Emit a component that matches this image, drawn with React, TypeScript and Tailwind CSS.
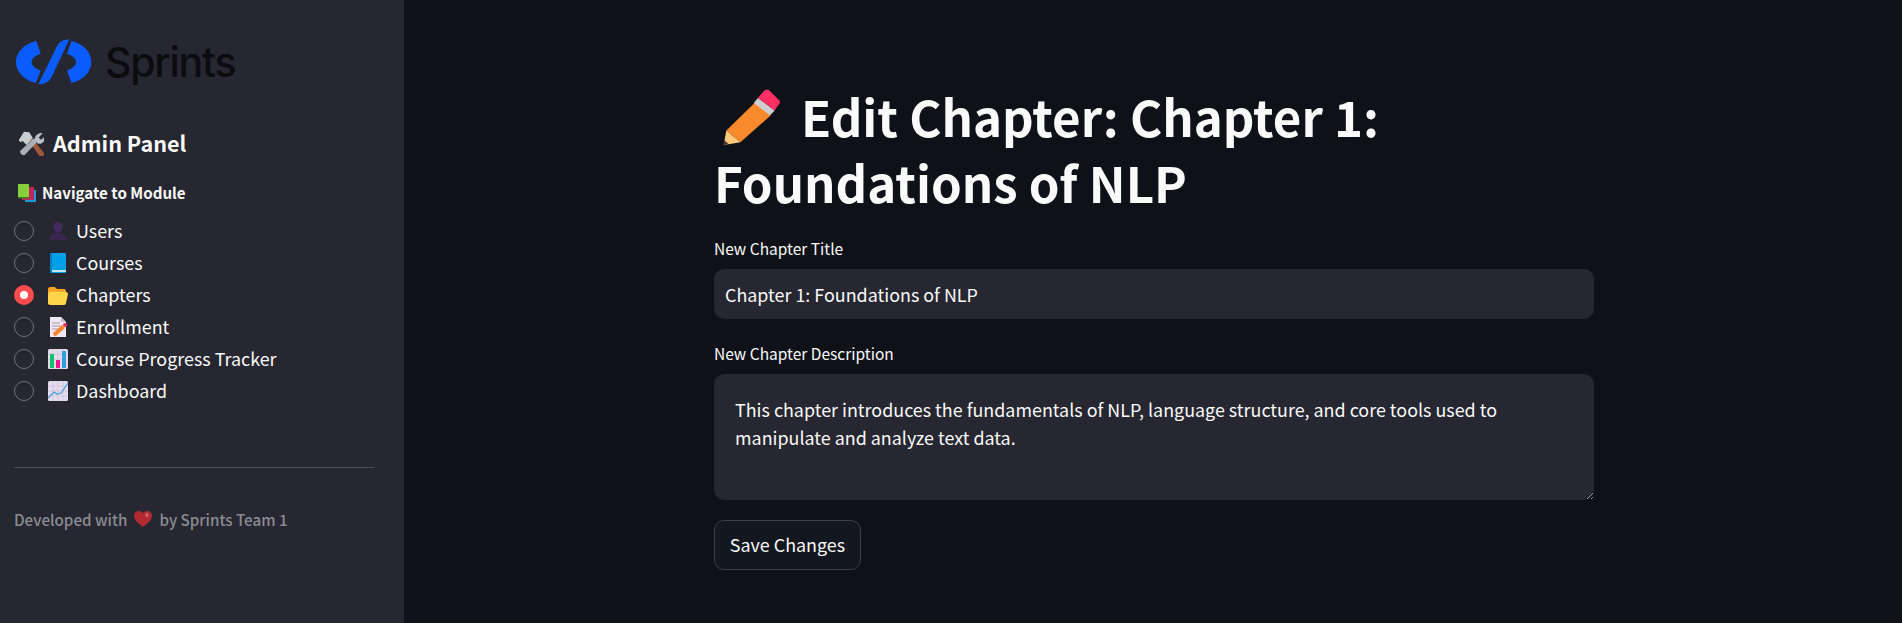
const font = "font-['Noto_Sans_CJK_SC',sans-serif]"

function SprintsLogo() {
  return (
    <svg width="80" height="46" viewBox="15 21 240 138" className="shrink-0">
      <path fill="#0b5cff" d="M79 27C42 36 18 60 18 90c0 30 24 55 60 63l14-38c-16-4-27-14-27-25 0-11 11-20 27-25z" />
      <path fill="#0b5cff" d="M184 27c37 9 60 33 60 63 0 30-24 55-60 63l-13-38c16-4 27-14 27-25 0-11-11-20-27-25z" />
      <path fill="#0b5cff" d="M178 22c-16 1-30 6-38 22L85 157c18-1 32-6 40-22z" />
    </svg>
  )
}

function Tools() {
  return (
    <svg width="26" height="26" viewBox="24 15 78 78" className="shrink-0">
      <path d="M52 42l10-8 40 50c2 8-6 10-8 10-4 1-6-2-8-4z" fill="#a0593a" />
      <path d="M30 78l42-38 10 10-38 40c-8 2-14-4-14-12z" fill="#aab0b5" />
      <path d="M98 24C84 22 74 32 74 44l10 12c12 2 24-8 20-22L94 44l-8-6z" fill="#b8bec3" />
      <path d="M26 46l16-26 16 2 10 16-18 22-12-12-6 4z" fill="#c8cdd1" />
    </svg>
  )
}

function Books() {
  return (
    <svg width="19" height="18" viewBox="0 0 19 18" className="shrink-0">
      <rect x="8" y="6" width="11" height="12" fill="#1c9bd6" />
      <rect x="5" y="3" width="12" height="13" fill="#c2255c" />
      <rect x="1" y="0" width="11" height="13" fill="#84d13a" />
      <rect x="1" y="13" width="11" height="1.5" fill="#3f7a1f" />
    </svg>
  )
}

function UserIcon() {
  return (
    <svg width="20" height="20" viewBox="0 0 20 20">
      <ellipse cx="10" cy="6" rx="4.5" ry="5.5" fill="#432a5c" />
      <path d="M1 19c0-4 3-6 7-7h4c4 1 7 3 7 7z" fill="#3a2450" />
    </svg>
  )
}

function BookIcon() {
  return (
    <svg width="20" height="20" viewBox="0 0 20 20">
      <rect x="2" y="0" width="16" height="20" rx="1" fill="#00a0e8" />
      <rect x="2" y="17" width="16" height="2" fill="#bfe6f7" />
      <rect x="2" y="0" width="2" height="20" fill="#0080c4" />
    </svg>
  )
}

function FolderIcon() {
  return (
    <svg width="20" height="20" viewBox="0 0 20 20">
      <path d="M0 4c0-1 1-2 2-2h5l2 2h7c1 0 2 1 2 2v2H0z" fill="#f5a623" />
      <path d="M0 18V9c0-1 1-2 2-2h16c1 0 2 1 2 2l-2 9c0 1-1 2-2 2H2c-1 0-2-1-2-2z" fill="#ffd54a" />
    </svg>
  )
}

function MemoIcon() {
  return (
    <svg width="20" height="20" viewBox="0 0 20 20">
      <path d="M2 0h11l5 5v15H2z" fill="#f0e8f2" />
      <path d="M13 0l5 5h-5z" fill="#c8bccc" />
      <path d="M4 6h8M4 9h10M4 12h6" stroke="#a99aae" strokeWidth="1" />
      <path d="M6 19l-1-3 9-8 3 3-9 8z" fill="#f5882c" />
      <circle cx="17" cy="8" r="2" fill="#f0305f" />
    </svg>
  )
}

function ChartIcon() {
  return (
    <svg width="20" height="20" viewBox="0 0 20 20">
      <rect width="20" height="20" rx="1.5" fill="#e6dcee" />
      <path d="M0 5h20M0 10h20M0 15h20M5 0v20M10 0v20M15 0v20" stroke="#c8bcd2" strokeWidth="0.6" />
      <rect x="2" y="5" width="4" height="14" fill="#14c26b" />
      <rect x="8" y="11" width="4" height="8" fill="#f0148c" />
      <rect x="14" y="2" width="4" height="17" fill="#2f9fe0" />
    </svg>
  )
}

function TrendIcon() {
  return (
    <svg width="20" height="20" viewBox="0 0 20 20">
      <rect width="20" height="20" rx="1.5" fill="#e6dcee" />
      <path d="M0 5h20M0 10h20M0 15h20M5 0v20M10 0v20M15 0v20" stroke="#c8bcd2" strokeWidth="0.6" />
      <path d="M0 17l6-6 3 2 4-1 7-10" fill="none" stroke="#3a9fe0" strokeWidth="1.2" />
    </svg>
  )
}

function Heart() {
  return (
    <svg width="18" height="16" viewBox="0 0 18 16" className="shrink-0">
      <path d="M9 16C4 12 0 9 0 5c0-3 2-5 5-5 2 0 3 1 4 2 1-1 2-2 4-2 3 0 5 2 5 5 0 4-4 7-9 11z" fill="#b32a32" />
      <ellipse cx="13" cy="4" rx="1.5" ry="2" fill="#d4686c" />
    </svg>
  )
}

function Pencil() {
  return (
    <svg width="57" height="57" viewBox="68 46 170 170" className="ml-[9px] mr-[21px] inline-block align-[-9px]">
      <path d="M78 170l87-85 45 40-90 80z" fill="#f98a2b" />
      <path d="M78 170l-8 43 50-8z" fill="#ffcb7a" />
      <path d="M72 198l-2 15 15-2z" fill="#4a3a30" />
      <path d="M160 88l12-15 50 37-14 15z" fill="#cfcfcf" />
      <path d="M172 73l18-21c7-7 14-6 20 2l22 22c8 8 8 12 0 19l-10 15z" fill="#ff2f66" />
    </svg>
  )
}

const modules = [
  { name: "Users", icon: <UserIcon /> },
  { name: "Courses", icon: <BookIcon /> },
  { name: "Chapters", icon: <FolderIcon />, active: true },
  { name: "Enrollment", icon: <MemoIcon /> },
  { name: "Course Progress Tracker", icon: <ChartIcon /> },
  { name: "Dashboard", icon: <TrendIcon /> },
]

export default function App() {
  return (
    <div className={`flex min-h-screen bg-[#0e1117] text-[#fafafa] ${font}`}>
      {/* Sidebar */}
      <aside className="w-[404px] shrink-0 bg-[#262730] pl-[14px] pr-[30px] pt-[39px]">
        <div className="flex h-[46px] items-center gap-[10px] pl-[1px]">
          <SprintsLogo />
          <span className="font-['Inter',sans-serif] text-[41px] font-medium leading-none tracking-[-0.03em] text-[#0b0b10]">Sprints</span>
        </div>

        <div className="mt-[44px] flex h-[28px] items-center gap-[9px] pl-[4px]">
          <Tools />
          <h3 className="text-[21.6px] font-semibold leading-none">Admin Panel</h3>
        </div>

        <div className="mt-[26px] flex h-[20px] items-center gap-[6px] pl-[3px]">
          <Books />
          <span className="text-[15.15px] font-semibold leading-none">Navigate to Module</span>
        </div>

        <ul className="mt-[12px] flex flex-col">
          {modules.map((m) => (
            <li key={m.name} className="flex h-[32px] items-center">
              {m.active ? (
                <span className="flex h-5 w-5 items-center justify-center rounded-full bg-[#ff4b4b]">
                  <span className="h-[8px] w-[8px] rounded-full bg-white" />
                </span>
              ) : (
                <span className="h-5 w-5 rounded-full border border-[#6f7078]" />
              )}
              <span className="ml-[14px] flex w-5 justify-center">{m.icon}</span>
              <span className="ml-[8px] text-[17.9px] leading-none">{m.name}</span>
            </li>
          ))}
        </ul>

        <hr className="mt-[60px] border-[#4c4d55]" />

        <div className="mt-[40px] flex items-center gap-[7px] text-[15.2px] font-medium leading-[22px] text-[#8b8c93]">
          <span>Developed with</span>
          <Heart />
          <span>by Sprints Team 1</span>
        </div>
      </aside>

      {/* Main content */}
      <main className="flex-1 pl-[310px] pr-[308px] pt-[83px]">
        <h1 className="text-[49.2px] font-bold leading-[66px]">
          <Pencil />
          Edit Chapter: Chapter 1: Foundations of NLP
        </h1>

        <label className="mt-[22px] block text-[15.5px] leading-[22px]">New Chapter Title</label>
        <input
          readOnly
          value="Chapter 1: Foundations of NLP"
          className="mt-[10px] block h-[50px] w-full rounded-[10px] bg-[#262730] px-[11px] text-[17.9px] outline-none"
        />

        <label className="mt-[23px] block text-[15.5px] leading-[22px]">New Chapter Description</label>
        <textarea
          readOnly
          value="This chapter introduces the fundamentals of NLP, language structure, and core tools used to manipulate and analyze text data."
          className="mt-[10px] block h-[126px] w-full resize-y rounded-[10px] bg-[#262730] px-[21px] py-[21px] text-[17.9px] leading-[28px] outline-none"
        />

        <button className="mt-[20px] block h-[50px] w-[147px] rounded-[10px] border border-[#3d3f49] bg-[#13171f] pb-[2px] text-[17.9px]">
          Save Changes
        </button>
      </main>
    </div>
  )
}
